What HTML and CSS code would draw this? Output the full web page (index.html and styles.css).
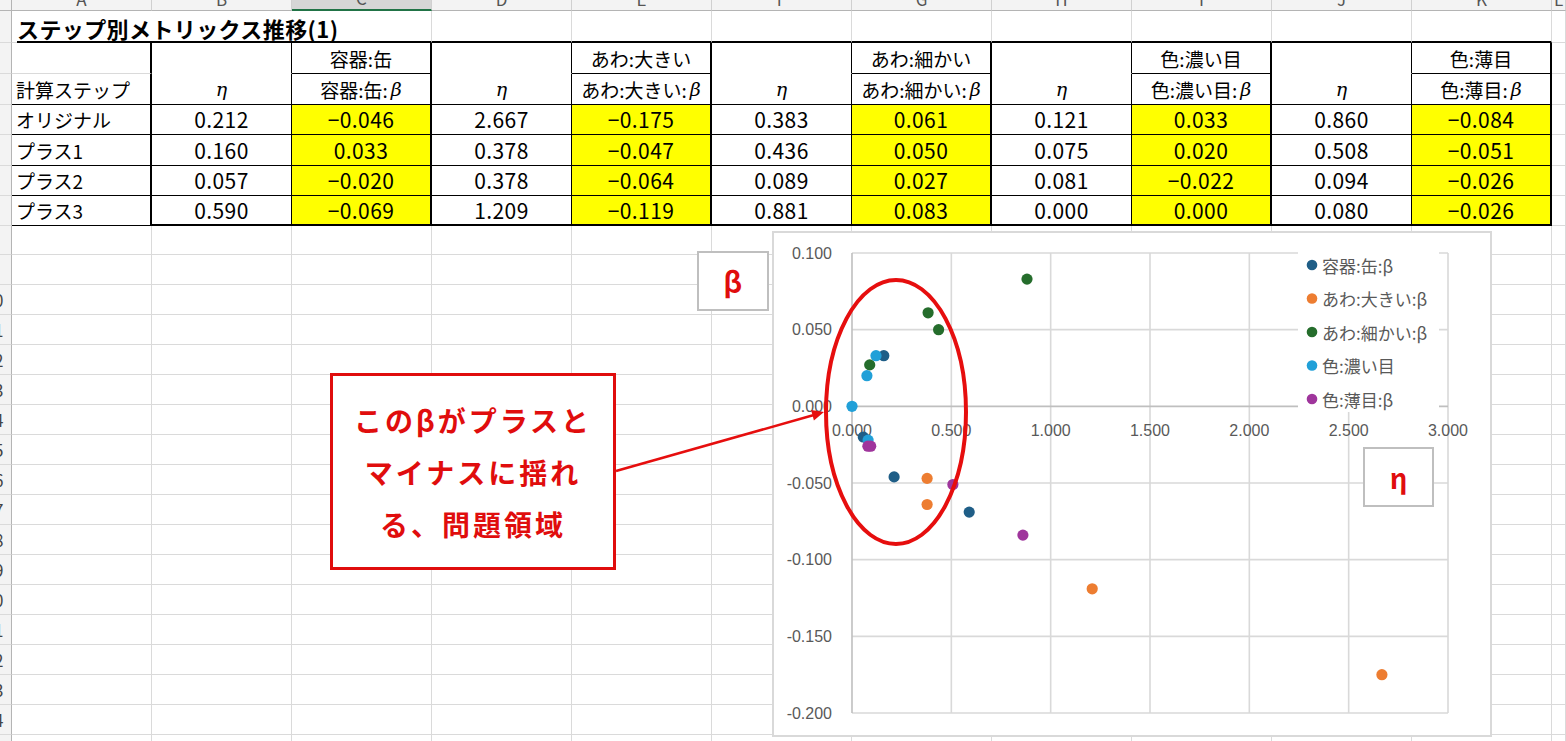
FILE: index.html
```html
<!DOCTYPE html>
<html lang="ja">
<head>
<meta charset="utf-8">
<title>ステップ別メトリックス推移(1)</title>
<link rel="stylesheet" href="styles.css">
</head>
<body>
<div class="page">
  <div class="sheet">
    <div class="row colhead">
      <b class="corner"></b><b><span>A</span></b><b><span>B</span></b><b class="sel"><span>C</span></b><b><span>D</span></b><b><span>E</span></b><b><span>F</span></b><b><span>G</span></b><b><span>H</span></b><b><span>I</span></b><b><span>J</span></b><b><span>K</span></b><b><span>L</span></b>
    </div>
    <div class="row r1">
      <b class="rh"><span>1</span></b>
      <i class="title-cell nr"><span class="title">ステップ別メトリックス推移(1)</span></i>
      <i class="t nr"></i><i class="t"></i><i class="t"></i><i class="t"></i><i class="t"></i><i class="t"></i><i class="t"></i><i class="t"></i><i class="t"></i><i class="t"></i><i></i>
    </div>
    <div class="row r2">
      <b class="rh"><span>2</span></b>
      <i class="a"></i>
      <i class="e2"></i><i class="b2">容器:缶</i>
      <i class="e2"></i><i class="b2">あわ:大きい</i>
      <i class="e2"></i><i class="b2">あわ:細かい</i>
      <i class="e2"></i><i class="b2">色:濃い目</i>
      <i class="e2"></i><i class="b2">色:薄目</i>
      <i></i>
    </div>
    <div class="row r3">
      <b class="rh"><span>3</span></b>
      <i class="a lab">計算ステップ</i>
      <i class="e"><em class="g">η</em></i><i class="b">容器:缶:<em class="g">β</em></i>
      <i class="e"><em class="g">η</em></i><i class="b">あわ:大きい:<em class="g">β</em></i>
      <i class="e"><em class="g">η</em></i><i class="b">あわ:細かい:<em class="g">β</em></i>
      <i class="e"><em class="g">η</em></i><i class="b">色:濃い目:<em class="g">β</em></i>
      <i class="e"><em class="g">η</em></i><i class="b">色:薄目:<em class="g">β</em></i>
      <i></i>
    </div>
    <div class="row r4 n">
      <b class="rh"><span>4</span></b>
      <i class="a lab">オリジナル</i>
      <i class="e">0.212</i><i class="b y">−0.046</i>
      <i class="e">2.667</i><i class="b y">−0.175</i>
      <i class="e">0.383</i><i class="b y">0.061</i>
      <i class="e">0.121</i><i class="b y">0.033</i>
      <i class="e">0.860</i><i class="b y">−0.084</i>
      <i></i>
    </div>
    <div class="row r5 n">
      <b class="rh"><span>5</span></b>
      <i class="a lab">プラス1</i>
      <i class="e">0.160</i><i class="b y">0.033</i>
      <i class="e">0.378</i><i class="b y">−0.047</i>
      <i class="e">0.436</i><i class="b y">0.050</i>
      <i class="e">0.075</i><i class="b y">0.020</i>
      <i class="e">0.508</i><i class="b y">−0.051</i>
      <i></i>
    </div>
    <div class="row r6 n">
      <b class="rh"><span>6</span></b>
      <i class="a lab">プラス2</i>
      <i class="e">0.057</i><i class="b y">−0.020</i>
      <i class="e">0.378</i><i class="b y">−0.064</i>
      <i class="e">0.089</i><i class="b y">0.027</i>
      <i class="e">0.081</i><i class="b y">−0.022</i>
      <i class="e">0.094</i><i class="b y">−0.026</i>
      <i></i>
    </div>
    <div class="row r7 n last">
      <b class="rh"><span>7</span></b>
      <i class="a lab">プラス3</i>
      <i class="e">0.590</i><i class="b y">−0.069</i>
      <i class="e">1.209</i><i class="b y">−0.119</i>
      <i class="e">0.881</i><i class="b y">0.083</i>
      <i class="e">0.000</i><i class="b y">0.000</i>
      <i class="e">0.080</i><i class="b y">−0.026</i>
      <i></i>
    </div>
    <div class="row r8"><b class="rh"><span>8</span></b><i></i><i></i><i></i><i></i><i></i><i></i><i></i><i></i><i></i><i></i><i></i><i></i></div>
    <div class="row"><b class="rh"><span>9</span></b><i></i><i></i><i></i><i></i><i></i><i></i><i></i><i></i><i></i><i></i><i></i><i></i></div>
    <div class="row"><b class="rh"><span>10</span></b><i></i><i></i><i></i><i></i><i></i><i></i><i></i><i></i><i></i><i></i><i></i><i></i></div>
    <div class="row"><b class="rh"><span>11</span></b><i></i><i></i><i></i><i></i><i></i><i></i><i></i><i></i><i></i><i></i><i></i><i></i></div>
    <div class="row"><b class="rh"><span>12</span></b><i></i><i></i><i></i><i></i><i></i><i></i><i></i><i></i><i></i><i></i><i></i><i></i></div>
    <div class="row"><b class="rh"><span>13</span></b><i></i><i></i><i></i><i></i><i></i><i></i><i></i><i></i><i></i><i></i><i></i><i></i></div>
    <div class="row"><b class="rh"><span>14</span></b><i></i><i></i><i></i><i></i><i></i><i></i><i></i><i></i><i></i><i></i><i></i><i></i></div>
    <div class="row"><b class="rh"><span>15</span></b><i></i><i></i><i></i><i></i><i></i><i></i><i></i><i></i><i></i><i></i><i></i><i></i></div>
    <div class="row"><b class="rh"><span>16</span></b><i></i><i></i><i></i><i></i><i></i><i></i><i></i><i></i><i></i><i></i><i></i><i></i></div>
    <div class="row"><b class="rh"><span>17</span></b><i></i><i></i><i></i><i></i><i></i><i></i><i></i><i></i><i></i><i></i><i></i><i></i></div>
    <div class="row"><b class="rh"><span>18</span></b><i></i><i></i><i></i><i></i><i></i><i></i><i></i><i></i><i></i><i></i><i></i><i></i></div>
    <div class="row"><b class="rh"><span>19</span></b><i></i><i></i><i></i><i></i><i></i><i></i><i></i><i></i><i></i><i></i><i></i><i></i></div>
    <div class="row"><b class="rh"><span>20</span></b><i></i><i></i><i></i><i></i><i></i><i></i><i></i><i></i><i></i><i></i><i></i><i></i></div>
    <div class="row"><b class="rh"><span>21</span></b><i></i><i></i><i></i><i></i><i></i><i></i><i></i><i></i><i></i><i></i><i></i><i></i></div>
    <div class="row"><b class="rh"><span>22</span></b><i></i><i></i><i></i><i></i><i></i><i></i><i></i><i></i><i></i><i></i><i></i><i></i></div>
    <div class="row"><b class="rh"><span>23</span></b><i></i><i></i><i></i><i></i><i></i><i></i><i></i><i></i><i></i><i></i><i></i><i></i></div>
    <div class="row"><b class="rh"><span>24</span></b><i></i><i></i><i></i><i></i><i></i><i></i><i></i><i></i><i></i><i></i><i></i><i></i></div>
    <div class="row"><b class="rh"><span>25</span></b><i></i><i></i><i></i><i></i><i></i><i></i><i></i><i></i><i></i><i></i><i></i><i></i></div>
  </div>

  <div class="label-box beta-box">β</div>

  <div class="chart">
    <svg class="plot" width="716" height="502" viewBox="774 233 716 502">
      <g class="grid">
        <line x1="852" y1="253" x2="1448" y2="253"/>
        <line x1="852" y1="329.67" x2="1448" y2="329.67"/>
        <line x1="852" y1="483" x2="1448" y2="483"/>
        <line x1="852" y1="559.67" x2="1448" y2="559.67"/>
        <line x1="852" y1="636.33" x2="1448" y2="636.33"/>
        <line x1="852" y1="713" x2="1448" y2="713"/>
        <line x1="951.33" y1="253" x2="951.33" y2="713"/>
        <line x1="1050.67" y1="253" x2="1050.67" y2="713"/>
        <line x1="1150" y1="253" x2="1150" y2="713"/>
        <line x1="1249.33" y1="253" x2="1249.33" y2="713"/>
        <line x1="1348.67" y1="253" x2="1348.67" y2="713"/>
        <line x1="1448" y1="253" x2="1448" y2="713"/>
      </g>
      <g class="axis">
        <line x1="852" y1="406.33" x2="1448" y2="406.33"/>
        <line x1="852" y1="253" x2="852" y2="713"/>
      </g>
      <g class="ylab">
        <text x="832" y="253">0.100</text>
        <text x="832" y="329.67">0.050</text>
        <text x="832" y="406.33">0.000</text>
        <text x="832" y="483">-0.050</text>
        <text x="832" y="559.67">-0.100</text>
        <text x="832" y="636.33">-0.150</text>
        <text x="832" y="713">-0.200</text>
      </g>
      <g class="xlab">
        <text x="852" y="430">0.000</text>
        <text x="951.33" y="430">0.500</text>
        <text x="1050.67" y="430">1.000</text>
        <text x="1150" y="430">1.500</text>
        <text x="1249.33" y="430">2.000</text>
        <text x="1348.67" y="430">2.500</text>
        <text x="1448" y="430">3.000</text>
      </g>
      <g class="s1">
        <circle cx="894.1" cy="476.9" r="5.6"/>
        <circle cx="883.8" cy="355.7" r="5.6"/>
        <circle cx="863.3" cy="437" r="5.6"/>
        <circle cx="969.2" cy="512.1" r="5.6"/>
      </g>
      <g class="s2">
        <circle cx="1381.9" cy="674.7" r="5.6"/>
        <circle cx="927.1" cy="478.4" r="5.6"/>
        <circle cx="927.1" cy="504.5" r="5.6"/>
        <circle cx="1092.2" cy="588.8" r="5.6"/>
      </g>
      <g class="s3">
        <circle cx="928.1" cy="312.8" r="5.6"/>
        <circle cx="938.6" cy="329.7" r="5.6"/>
        <circle cx="869.7" cy="364.9" r="5.6"/>
        <circle cx="1027" cy="279.1" r="5.6"/>
      </g>
      <g class="s4">
        <circle cx="876" cy="355.7" r="5.6"/>
        <circle cx="866.9" cy="375.7" r="5.6"/>
        <circle cx="868.1" cy="440.1" r="5.6"/>
        <circle cx="852" cy="406.3" r="5.6"/>
      </g>
      <g class="s5">
        <circle cx="1022.9" cy="535.1" r="5.6"/>
        <circle cx="952.9" cy="484.5" r="5.6"/>
        <circle cx="870.7" cy="446.2" r="5.6"/>
        <circle cx="867.9" cy="446.2" r="5.6"/>
      </g>
      <g class="legend">
        <rect x="1298" y="244" width="141" height="168"/>
        <circle class="s1" cx="1312" cy="265" r="5.3"/>
        <text x="1322" y="265">容器:缶:β</text>
        <circle class="s2" cx="1312" cy="298.5" r="5.3"/>
        <text x="1322" y="298.5">あわ:大きい:β</text>
        <circle class="s3" cx="1312" cy="332" r="5.3"/>
        <text x="1322" y="332">あわ:細かい:β</text>
        <circle class="s4" cx="1312" cy="365.5" r="5.3"/>
        <text x="1322" y="365.5">色:濃い目</text>
        <circle class="s5" cx="1312" cy="399" r="5.3"/>
        <text x="1322" y="399">色:薄目:β</text>
      </g>
    </svg>
  </div>

  <div class="label-box eta-box">η</div>

  <div class="callout">
    <span>このβがプラスと</span>
    <span>マイナスに揺れ</span>
    <span>る、問題領域</span>
  </div>

  <svg class="marks" width="1566" height="741" viewBox="0 0 1566 741">
    <ellipse cx="896" cy="412" rx="70" ry="132"/>
    <line x1="616" y1="471" x2="813" y2="415.3"/>
    <polygon points="824,412 813.9,420.6 811.1,410"/>
  </svg>
</div>
</body>
</html>
```

FILE: styles.css
```css
* { box-sizing: border-box; }

html, body {
  margin: 0;
  padding: 0;
}

body {
  width: 1566px;
  height: 741px;
  overflow: hidden;
  background: #fff;
  color: #000;
  font-family: "Noto Sans CJK JP", "Noto Sans", sans-serif;
}

.page {
  position: relative;
  width: 1566px;
  height: 741px;
  overflow: hidden;
}

/* ---------- worksheet grid ---------- */
.sheet {
  display: flex;
  flex-direction: column;
}

.row {
  display: grid;
  grid-template-columns: 12px repeat(11, 140px) 14px;
  height: 30px;
  flex: none;
}

.r1 { height: 32px; }
.r2 { height: 31px; }
.r3 { height: 31px; }
.r5 { height: 31px; }
.r8 { height: 29px; }

.row > i {
  font-style: normal;
  display: flex;
  align-items: center;
  justify-content: center;
  white-space: nowrap;
  font-size: 19px;
  line-height: 1;
  border-right: 1px solid #dadada;
  border-bottom: 1px solid #dadada;
}

.n > .e,
.n > .b {
  font-size: 21px;
  letter-spacing: 0.4px;
}

/* row headers */
.rh {
  background: #f3f3f3;
  border-right: 1px solid #b4b4b4;
  border-bottom: 1px solid #dadada;
  overflow: hidden;
  display: flex;
  align-items: center;
  justify-content: center;
  font-weight: normal;
  font-size: 17px;
  color: #444;
}

.rh span {
  flex: 0 0 40px;
  text-align: center;
  margin-right: 23px;
}

/* column headers */
.colhead { height: 11px; }

.colhead b {
  background: #f3f3f3;
  border-right: 1px solid #d0d0d0;
  border-bottom: 1px solid #b4b4b4;
  overflow: hidden;
  display: flex;
  align-items: flex-end;
  justify-content: center;
  font-weight: normal;
  font-size: 17px;
  color: #555;
}

.colhead b span {
  display: block;
  line-height: 17px;
  margin-bottom: 3px;
}

.colhead .corner { border-right-color: #b4b4b4; }

.colhead .sel {
  background: #d6d6d6;
  border-bottom: 2px solid #217346;
}

/* title */
.title-cell {
  overflow: visible;
  justify-content: flex-start !important;
  align-items: flex-end !important;
  padding-left: 5px;
}

.title {
  font-size: 22px;
  font-weight: bold;
  line-height: 28px;
  text-decoration: underline;
  text-decoration-thickness: 2px;
  text-underline-offset: 3px;
  letter-spacing: 0.4px;
}

/* table borders */
.nr { border-right-color: transparent !important; }

.row > .t { border-bottom: 2px solid #000; }

.row > .a { border-right: 2px solid #000; }

.row > .lab {
  justify-content: flex-start;
  padding-left: 4px;
  border-bottom-color: #000;
}

.row > .e2 {
  border-right-color: #000;
  border-bottom-color: #fff;
}

.row > .b2 {
  border-right: 2px solid #000;
  border-bottom-color: #000;
}

.row > .e {
  border-right-color: #000;
  border-bottom-color: #000;
}

.row > .b {
  border-right: 2px solid #000;
  border-bottom-color: #000;
}

.last > .e,
.last > .b { border-bottom-width: 2px; }

.row > .y { background: #ffff00; }

.g {
  font-family: "DejaVu Serif", "Liberation Serif", serif;
  font-style: italic;
  font-size: 19px;
  margin-left: 3px;
}

.e > .g { margin-left: 0; }

/* ---------- overlays ---------- */
.label-box {
  position: absolute;
  display: flex;
  align-items: center;
  justify-content: center;
  background: #fff;
  border: 2px solid #bfbfbf;
  color: #e00d0d;
  font-weight: bold;
  font-size: 28px;
  z-index: 3;
}

.beta-box {
  left: 697px;
  top: 251px;
  width: 72px;
  height: 60px;
}

.eta-box {
  left: 1363px;
  top: 447px;
  width: 71px;
  height: 60px;
}

.chart {
  position: absolute;
  left: 772px;
  top: 231px;
  width: 720px;
  height: 506px;
  background: #fff;
  border: 2px solid #d9d9d9;
  z-index: 2;
}

.plot { display: block; }

.grid line {
  stroke: #d9d9d9;
  stroke-width: 1.6;
}

.axis line {
  stroke: #bfbfbf;
  stroke-width: 1.6;
}

.ylab text,
.xlab text {
  font-family: "Liberation Sans", Arial, sans-serif;
  font-size: 16px;
  fill: #595959;
  dominant-baseline: central;
}

.ylab text { text-anchor: end; }
.xlab text { text-anchor: middle; }

.s1 { fill: #1f5e87; }
.s2 { fill: #ed7d31; }
.s3 { fill: #256d2c; }
.s4 { fill: #21a0d8; }
.s5 { fill: #9f359c; }

.legend rect { fill: #fff; }

.legend text {
  font-family: "Noto Sans CJK JP", sans-serif;
  font-size: 17px;
  fill: #595959;
  dominant-baseline: central;
}

.callout {
  position: absolute;
  left: 330px;
  top: 373px;
  width: 286px;
  height: 197px;
  background: #fff;
  border: 3px solid #e00d0d;
  display: flex;
  flex-direction: column;
  align-items: center;
  justify-content: center;
  color: #e00d0d;
  font-weight: bold;
  font-size: 28px;
  line-height: 52px;
  letter-spacing: 3px;
  z-index: 3;
}

.marks {
  position: absolute;
  left: 0;
  top: 0;
  z-index: 4;
  pointer-events: none;
}

.marks ellipse {
  fill: none;
  stroke: #e60e0e;
  stroke-width: 4;
}

.marks line {
  stroke: #e60e0e;
  stroke-width: 2.5;
}

.marks polygon { fill: #e60e0e; }
```
